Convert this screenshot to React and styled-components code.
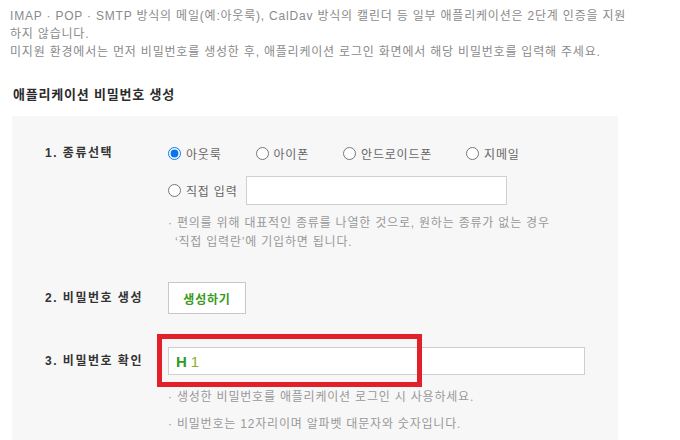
import React, { useState } from "react";
import styled, { createGlobalStyle } from "styled-components";

const GlobalStyle = createGlobalStyle`
  body {
    margin: 0;
    background: #fff;
    font-family: "Liberation Sans", "Noto Sans CJK KR", sans-serif;
    font-size: 12px;
    letter-spacing: 0.8px;
  }
`;

const Page = styled.div`
  width: 680px;
  height: 440px;
  overflow: hidden;
  padding-top: 7px;
  box-sizing: border-box;
`;

const Intro = styled.p`
  margin: 0;
  padding-left: 10px;
  color: #8a8a8a;
  line-height: 18px;
  white-space: nowrap;
`;

const Title = styled.h3`
  margin: 25px 0 12px;
  padding-left: 13px;
  font-size: 13px;
  line-height: 18px;
  font-weight: bold;
  color: #2b2b2b;
  letter-spacing: 0.8px;
`;

const Panel = styled.div`
  margin-left: 12px;
  width: 606px;
  background: #f7f7f7;
  padding: 27px 0 20px 33px;
  box-sizing: border-box;
  display: grid;
  grid-template-columns: 123px 1fr;
  row-gap: 30px;
`;

const Label = styled.div`
  font-weight: bold;
  color: #333;
  line-height: ${(p) => p.$h}px;
  letter-spacing: 1.5px;
  white-space: nowrap;
`;

const Field = styled.div`
  display: flex;
  flex-direction: column;
`;

const OptionRow = styled.div`
  display: flex;
  align-items: center;
  height: ${(p) => p.$h || 20}px;
  margin-top: ${(p) => p.$mt || 0}px;
`;

const Option = styled.label`
  display: flex;
  align-items: center;
  margin-right: ${(p) => (p.$last ? 0 : 34)}px;
  color: #666;
  white-space: nowrap;
`;

const Radio = styled.input.attrs({ type: "radio" })`
  width: 13px;
  height: 13px;
  margin: 0 5px 0 0;
  accent-color: #0a74f0;
`;

const TextBox = styled.input`
  width: ${(p) => p.$w}px;
  height: 29px;
  box-sizing: border-box;
  border: 1px solid #cfcfcf;
  background: #fff;
  margin-left: 8px;
  outline: none;
`;

const Note = styled.p`
  margin: ${(p) => p.$mt || 0}px 0 0;
  color: #999;
  line-height: 19px;
  white-space: nowrap;
`;

const Indent = styled.span`
  padding-left: 7px;
`;

const GenerateButton = styled.button`
  width: 78px;
  height: 32px;
  background: #fff;
  border: 1px solid #c8c8c8;
  color: #3a9a1c;
  font-family: inherit;
  font-size: 12px;
  font-weight: bold;
  letter-spacing: 0.8px;
  cursor: pointer;
  padding: 0;
`;

const PasswordWrap = styled.div`
  position: relative;
  width: 417px;
  margin-top: 3px;
`;

const PasswordBox = styled.div`
  height: 28px;
  box-sizing: border-box;
  border: 1px solid #cfcfcf;
  background: #fff;
  display: flex;
  align-items: center;
  padding-left: 7px;
  font-size: 15px;
  letter-spacing: 0;
  gap: 4px;
`;

const Char = styled.span`
  color: ${(p) => p.$c};
  font-weight: ${(p) => (p.$bold ? "bold" : "normal")};
`;

const Highlight = styled.div`
  position: absolute;
  left: -11px;
  top: -13px;
  width: 265px;
  height: 53px;
  box-sizing: border-box;
  border: 5px solid #e1202a;
  pointer-events: none;
`;

const types = ["아웃룩", "아이폰", "안드로이드폰", "지메일"];

export default function App() {
  const [type, setType] = useState("아웃룩");

  return (
    <Page>
      <GlobalStyle />
      <Intro>
        IMAP · POP · SMTP 방식의 메일(예:아웃룩), CalDav 방식의 캘린더 등 일부 애플리케이션은 2단계 인증을 지원
        <br />
        하지 않습니다.
        <br />
        미지원 환경에서는 먼저 비밀번호를 생성한 후, 애플리케이션 로그인 화면에서 해당 비밀번호를 입력해 주세요.
      </Intro>

      <Title>애플리케이션 비밀번호 생성</Title>

      <Panel>
        <Label $h={20}>1. 종류선택</Label>
        <Field>
          <OptionRow>
            {types.map((t) => (
              <Option key={t}>
                <Radio name="kind" checked={type === t} onChange={() => setType(t)} />
                {t}
              </Option>
            ))}
          </OptionRow>
          <OptionRow $h={29} $mt={13}>
            <Option $last>
              <Radio name="kind" checked={type === "direct"} onChange={() => setType("direct")} />
              직접 입력
            </Option>
            <TextBox $w={261} />
          </OptionRow>
          <Note $mt={9}>
            · 편의를 위해 대표적인 종류를 나열한 것으로, 원하는 종류가 없는 경우
            <br />
            <Indent>‘직접 입력란’에 기입하면 됩니다.</Indent>
          </Note>
        </Field>

        <Label $h={32}>2. 비밀번호 생성</Label>
        <Field>
          <GenerateButton>생성하기</GenerateButton>
        </Field>

        <Label $h={34}>3. 비밀번호 확인</Label>
        <Field>
          <PasswordWrap>
            <PasswordBox>
              <Char $c="#2f9a2a" $bold>H</Char>
              <Char $c="#8cae2c">1</Char>
            </PasswordBox>
            <Highlight />
          </PasswordWrap>
          <Note $mt={13}>· 생성한 비밀번호를 애플리케이션 로그인 시 사용하세요.</Note>
          <Note $mt={8}>· 비밀번호는 12자리이며 알파벳 대문자와 숫자입니다.</Note>
        </Field>
      </Panel>
    </Page>
  );
}
